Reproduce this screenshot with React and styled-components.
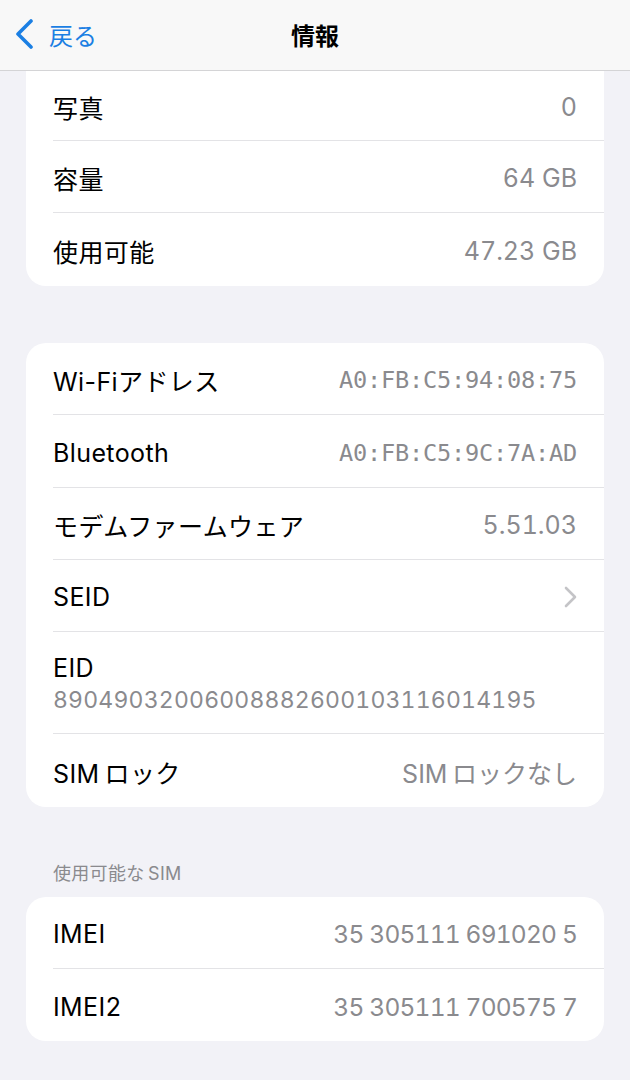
import React from 'react'
import styled, { createGlobalStyle } from 'styled-components'

const GlobalStyle = createGlobalStyle`
  html, body {
    margin: 0;
    padding: 0;
    background: #f2f2f7;
  }
  body {
    font-family: Inter, "Noto Sans CJK JP", sans-serif;
    -webkit-font-smoothing: antialiased;
  }
`;

const Page = styled.div`
  width: 630px;
  min-height: 1080px;
  background: #f2f2f7;
`;

const NavBar = styled.header`
  height: 71px;
  box-sizing: border-box;
  display: grid;
  grid-template-columns: 1fr auto 1fr;
  align-items: center;
  background: #f8f8f8;
  border-bottom: 1px solid #d4d4d6;
`;

const BackButton = styled.div`
  display: flex;
  align-items: center;
  gap: 15px;
  padding-left: 14px;
  color: #1b7fe3;
  font-size: 24px;
  padding-bottom: 2px;
`;

const Title = styled.h1`
  margin: 0;
  font-size: 24px;
  font-weight: 700;
  color: #000;
  padding-bottom: 2px;
`;

const Content = styled.main`
  padding: 0 26px 40px;
`;

const Card = styled.section`
  background: #fff;
  border-radius: ${p => (p.$clipped ? '0 0 20px 20px' : '20px')};
  margin-top: ${p => p.$gap || 0}px;
  overflow: hidden;
`;

const Row = styled.div`
  height: ${p => p.$h || 72}px;
  box-sizing: border-box;
  margin-left: 27px;
  padding: 3px 27px 0 0;
  display: flex;
  align-items: center;
  justify-content: space-between;
  border-bottom: 1px solid #e3e3e6;
  &:last-child {
    border-bottom: none;
  }
`;

const StackRow = styled(Row)`
  flex-direction: column;
  align-items: flex-start;
  justify-content: center;
  gap: 3px;
  padding-top: 1px;
`;

const Label = styled.span`
  font-size: 25px;
  color: #000;
  letter-spacing: 0.4px;
`;

const Value = styled.span`
  font-size: ${p => (p.$mono ? 23.6 : p.$tight ? 24.5 : 25)}px;
  color: #8a8a8e;
  font-family: ${p =>
    p.$mono
      ? '"DejaVu Sans Mono", monospace'
      : 'Inter, "Noto Sans CJK JP", sans-serif'};
  font-variant-numeric: tabular-nums;
  letter-spacing: ${p => (p.$mono ? '-0.2px' : p.$tight ? '-0.8px' : '0')};
`;

const LongValue = styled.span`
  font-size: 23px;
  color: #8a8a8e;
  font-variant-numeric: tabular-nums;
  letter-spacing: 0.2px;
`;

const SectionHeader = styled.div`
  padding: 56px 27px 12px;
  font-size: 18px;
  line-height: 22px;
  color: #8a8a8e;
  letter-spacing: 0.3px;
`;

const Chevron = ({ color = '#c4c4c7', w = 13, h = 22, stroke = 2.6 }) => (
  <svg width={w} height={h} viewBox="0 0 13 22" fill="none">
    <path d="M2 2 L11 11 L2 20" stroke={color} strokeWidth={stroke} strokeLinecap="round" strokeLinejoin="round" />
  </svg>
);

const BackChevron = () => (
  <svg width="20" height="30" viewBox="0 0 20 30" fill="none">
    <path d="M17 2 L4 15 L17 28" stroke="#1b7fe3" strokeWidth="3.6" strokeLinecap="round" strokeLinejoin="round" />
  </svg>
);

const storage = [
  { label: '写真', value: '0', h: 70 },
  { label: '容量', value: '64 GB' },
  { label: '使用可能', value: '47.23 GB', h: 73 },
];

const sims = [
  { label: 'IMEI', value: '35 305111 691020 5' },
  { label: 'IMEI2', value: '35 305111 700575 7' },
];

export default function App() {
  return (
    <Page>
      <GlobalStyle />
      <NavBar>
        <BackButton>
          <BackChevron />
          <span>戻る</span>
        </BackButton>
        <Title>情報</Title>
        <div />
      </NavBar>
      <Content>
        <Card $clipped>
          {storage.map(r => (
            <Row key={r.label} $h={r.h}>
              <Label>{r.label}</Label>
              <Value>{r.value}</Value>
            </Row>
          ))}
        </Card>

        <Card $gap={57}>
          <Row>
            <Label>Wi-Fiアドレス</Label>
            <Value $mono>A0:FB:C5:94:08:75</Value>
          </Row>
          <Row $h={73}>
            <Label>Bluetooth</Label>
            <Value $mono>A0:FB:C5:9C:7A:AD</Value>
          </Row>
          <Row>
            <Label>モデムファームウェア</Label>
            <Value>5.51.03</Value>
          </Row>
          <Row>
            <Label>SEID</Label>
            <Chevron />
          </Row>
          <StackRow $h={102}>
            <Label>EID</Label>
            <LongValue>89049032006008882600103116014195</LongValue>
          </StackRow>
          <Row $h={73}>
            <Label>SIM{'\u2009'}ロック</Label>
            <Value>SIM{'\u2009'}ロックなし</Value>
          </Row>
        </Card>

        <SectionHeader>使用可能な{'\u2009'}SIM</SectionHeader>
        <Card>
          {sims.map(r => (
            <Row key={r.label}>
              <Label>{r.label}</Label>
              <Value $tight>{r.value}</Value>
            </Row>
          ))}
        </Card>
      </Content>
    </Page>
  )
}
